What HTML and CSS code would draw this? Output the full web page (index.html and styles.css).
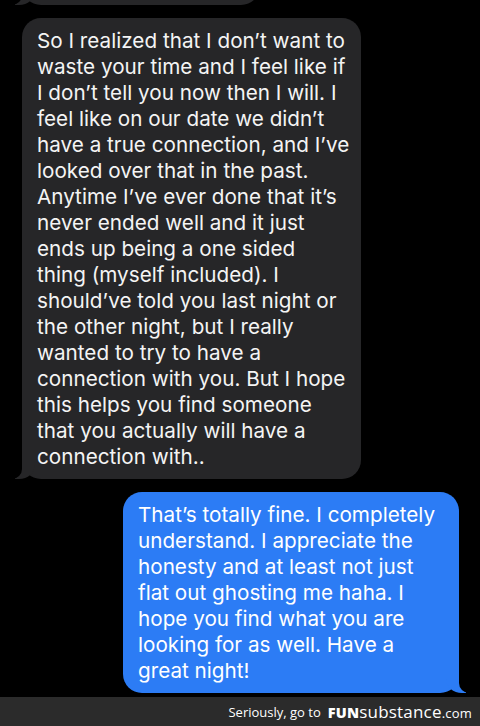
FILE: index.html
```html
<!DOCTYPE html>
<html lang="en">
<head>
    <meta charset="UTF-8">
    <meta name="viewport" content="width=device-width, initial-scale=1.0">
    <title>Messages</title>
    <link rel="stylesheet" href="styles.css">
</head>
<body>
    <div class="thread">
        <div class="bubble in prev"></div>
        <div class="bubble in">
            So I realized that I don’t want to<br>
            waste your time and I feel like if<br>
            I don’t tell you now then I will. I<br>
            feel like on our date we didn’t<br>
            have a true connection, and I’ve<br>
            looked over that in the past.<br>
            Anytime I’ve ever done that it’s<br>
            never ended well and it just<br>
            ends up being a one sided<br>
            thing (myself included). I<br>
            should’ve told you last night or<br>
            the other night, but I really<br>
            wanted to try to have a<br>
            connection with you. But I hope<br>
            this helps you find someone<br>
            that you actually will have a<br>
            connection with..
        </div>
        <div class="bubble out">
            That’s totally fine. I completely<br>
            understand. I appreciate the<br>
            honesty and at least not just<br>
            flat out ghosting me haha. I<br>
            hope you find what you are<br>
            looking for as well. Have a<br>
            great night!
        </div>
    </div>
    <div class="footer">
        <span class="seriously">Seriously, go to</span>
        <span class="brand"><b>FUN</b>substance<small>.com</small></span>
    </div>
</body>
</html>
```

FILE: styles.css
```css
body {
    margin: 0;
    padding: 0;
    width: 480px;
    height: 726px;
    overflow: hidden;
    background-color: #000;
    font-family: Inter, "Open Sans", sans-serif;
    display: flex;
    flex-direction: column;
}
.thread {
    flex: 1;
    display: flex;
    flex-direction: column;
    gap: 13px;
    padding: 0 21px 0 22px;
}
.bubble {
    position: relative;
    border-radius: 19px;
    padding: 10px 15px 9px 15px;
    font-size: 20.7px;
    line-height: 26px;
    color: #f4f4f4;
    white-space: nowrap;
}
/* tail, left side */
.bubble.in {
    align-self: flex-start;
    width: 309px;
    background-color: #262628;
}
.bubble.in::before {
    content: "";
    position: absolute;
    bottom: 0;
    left: -7px;
    width: 20px;
    height: 20px;
    background: #262628;
    border-bottom-right-radius: 16px 14px;
}
.bubble.in::after {
    content: "";
    position: absolute;
    bottom: 0;
    left: -26px;
    width: 26px;
    height: 20px;
    background: #000;
    border-bottom-right-radius: 10px;
}
.bubble.prev {
    width: 238px;
    height: 40px;
    margin-top: -35px;
    padding: 0;
}
/* tail, right side */
.bubble.out {
    align-self: flex-end;
    width: 306px;
    background-color: #2c7cf5;
    color: #fff;
}
.bubble.out::before {
    content: "";
    position: absolute;
    bottom: 0;
    right: -7px;
    width: 20px;
    height: 20px;
    background: #2c7cf5;
    border-bottom-left-radius: 16px 14px;
}
.bubble.out::after {
    content: "";
    position: absolute;
    bottom: 0;
    right: -26px;
    width: 26px;
    height: 20px;
    background: #000;
    border-bottom-left-radius: 10px;
}
.footer {
    height: 29px;
    background-color: #2b2b2b;
    color: #fff;
    display: flex;
    justify-content: flex-end;
    align-items: center;
    gap: 7px;
    padding-right: 8px;
    font-family: "Open Sans", sans-serif;
}
.seriously {
    font-size: 13px;
}
.brand {
    font-size: 17px;
    letter-spacing: 0.2px;
}
.brand b {
    font-size: 14.5px;
    font-weight: 800;
}
.brand small {
    font-size: 13px;
}
```
